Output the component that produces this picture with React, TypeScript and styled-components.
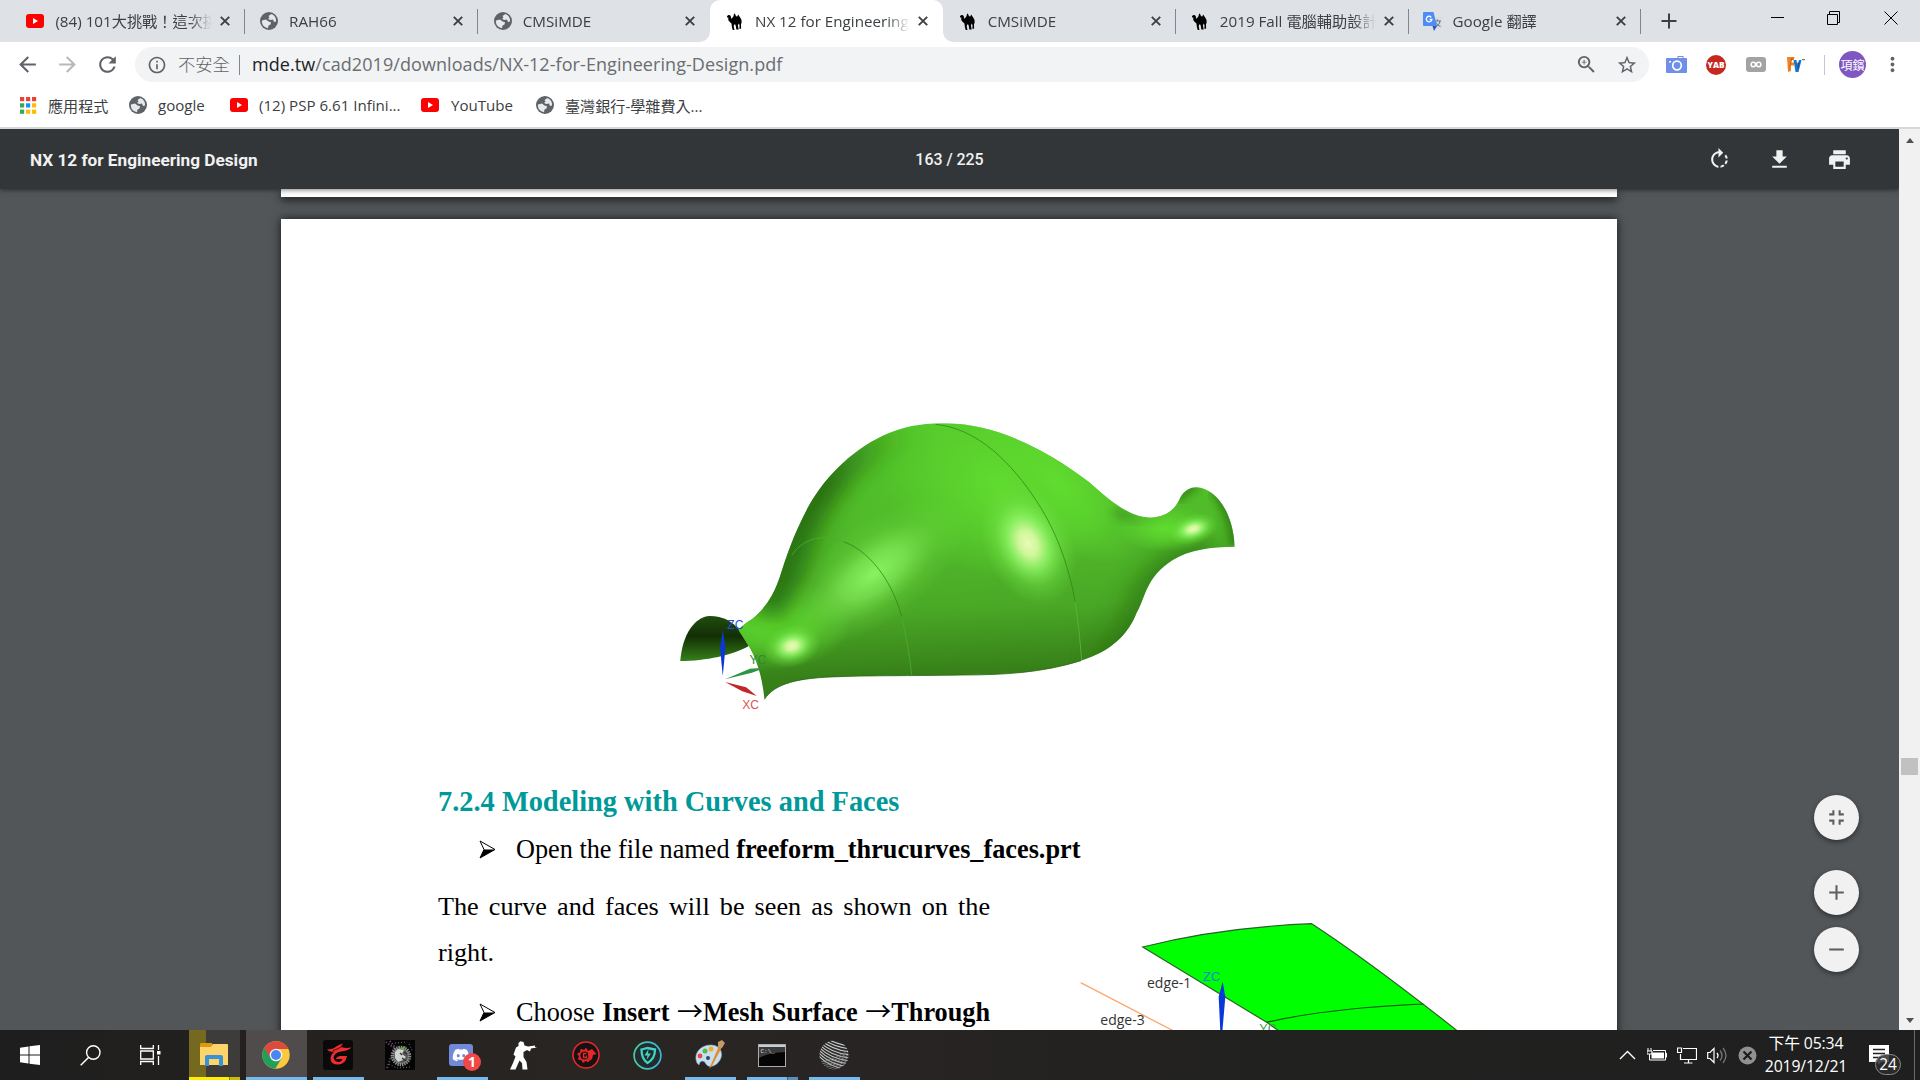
import React from "react";
import styled, { createGlobalStyle } from "styled-components";
import {
  MdRotateRight, MdFileDownload, MdPrint, MdFullscreenExit, MdAdd, MdRemove,
  MdArrowBack, MdArrowForward, MdRefresh, MdInfoOutline, MdZoomIn, MdStarBorder,
  MdMoreVert,
} from "react-icons/md";
import { FaDiscord } from "react-icons/fa";

const ui = `"Open Sans", "Noto Sans CJK TC", sans-serif`;

const Global = createGlobalStyle`
  html, body { margin: 0; padding: 0; overflow: hidden; }
  * { box-sizing: border-box; }
  svg { display: block; flex: none; }
`;

const Screen = styled.div`
  width: 1920px; height: 1080px; display: flex; flex-direction: column;
  font-family: ${ui}; overflow: hidden; background: #fff;
`;

/* ---------- browser tabs ---------- */
const TabStrip = styled.div`
  height: 42px; flex: none; background: #dee1e6; display: flex; padding-left: 12.4px;
`;
const Tab = styled.div<{ $active?: boolean; $line?: boolean; $pad?: number }>`
  width: 232.7px; height: 42px; flex: none; display: flex; align-items: center;
  padding: 0 12px 0 ${(p) => p.$pad ?? 14}px; position: relative;
  background: ${(p) => (p.$active ? "#fff" : "transparent")};
  border-radius: ${(p) => (p.$active ? "10px 10px 0 0" : "0")};
  &::after {
    content: ""; position: absolute; right: 0; top: 9px; width: 1px; height: 25px;
    background: ${(p) => (p.$line ? "#80868b" : "transparent")};
  }
`;
const TabFoot = styled.i<{ $right?: boolean }>`
  position: absolute; bottom: 0; width: 10px; height: 10px;
  ${(p) => (p.$right ? "right: -10px" : "left: -10px")};
  background: radial-gradient(circle at ${(p) => (p.$right ? "100%" : "0")} 0, #dee1e6 9.5px, #fff 10px);
`;
const Favicon = styled.span`
  width: 18px; height: 18px; margin-right: 11px; display: flex; align-items: center; justify-content: center; flex: none;
`;
const TabTitle = styled.span`
  flex: 1; white-space: nowrap; overflow: hidden; font-size: 15.2px; line-height: 24px; color: #3c4043;
  mask-image: linear-gradient(90deg, #000 calc(100% - 24px), transparent);
`;
const TabClose = styled.span`
  width: 16px; margin-left: 5px; display: flex; justify-content: center;
`;
const NewTab = styled.span`
  width: 55px; display: flex; align-items: center; justify-content: center;
`;
const WindowButtons = styled.div`
  margin-left: auto; display: flex; height: 36px; padding-right: 1px;
`;
const WinButton = styled.span`
  width: 57px; display: flex; align-items: center; justify-content: center;
`;

/* ---------- address bar ---------- */
const AddressBar = styled.div`
  height: 46px; flex: none; display: flex; align-items: center; padding: 0 14px 1px 15px; color: #5f6368;
`;
const NavButton = styled.span<{ $dim?: boolean }>`
  width: 40px; display: flex; justify-content: center; padding-right: 15px;
  opacity: ${(p) => (p.$dim ? 0.45 : 1)};
`;
const Omnibox = styled.div`
  width: 1514px; flex: none; height: 35px; border-radius: 18px; background: #f1f3f4; display: flex; align-items: center;
  padding: 0 12px 0 12px;
`;
const Insecure = styled.span`
  font-size: 17.3px; margin-left: 11px; width: 61px; white-space: nowrap; font-weight: 300; padding-bottom: 2px;
`;
const Divider = styled.i<{ $h: number; $c: string }>`
  width: 1px; height: ${(p) => p.$h}px; background: ${(p) => p.$c}; flex: none;
`;
const Url = styled.span`
  margin-left: 12px; font-size: 18px; letter-spacing: 0.07px; white-space: nowrap; flex: 1; color: #6a6d71; padding-bottom: 2px;
  b { font-weight: 400; color: #202124; }
`;
const OmniAction = styled.span`
  width: 59px; display: flex; justify-content: center;
  &:last-child { width: 21px; }
`;
const Extensions = styled.div`
  display: flex; align-items: center; margin-left: 7px; flex: none;
`;
const Ext = styled.span`
  width: 40px; display: flex; justify-content: center;
  &:nth-child(4) { margin-right: 8px; }
`;
const Avatar = styled.span`
  width: 27px; height: 27px; border-radius: 50%; background: #7e57c2; color: #fff; font-size: 12px; flex: none;
  display: flex; align-items: center; justify-content: center; margin: 0 15px 0 14px; white-space: nowrap;
`;

/* ---------- bookmarks ---------- */
const Bookmarks = styled.div`
  height: 41px; flex: none; display: flex; align-items: center; padding: 0 0 5px 20px; border-bottom: 2px solid #d6d8dc;
`;
const Bookmark = styled.span<{ $w: number; $gap?: number }>`
  width: ${(p) => p.$w}px; display: flex; align-items: center; gap: ${(p) => p.$gap ?? 11}px; font-size: 15.100px; color: #3c4043;
  white-space: nowrap;
`;

/* ---------- pdf viewer ---------- */
const Browser = styled.div`height: 901px; flex: none; display: flex;`;
const Viewer = styled.div`
  width: 1899px; height: 901px; background: #525659; display: flex; flex-direction: column; overflow: hidden; position: relative;
`;
const PdfBar = styled.div`
  height: 60px; flex: none; background: #323639; color: #f1f1f1; display: grid; align-items: center;
  grid-template-columns: 1fr auto 1fr; padding: 0 30px; z-index: 2;
  box-shadow: 0 1px 5px rgba(0,0,0,.5);
  font: 500 15.9px Roboto, sans-serif;
`;
const PdfTitle = styled.span`font-size: 17.2px; font-weight: 700; padding-top: 1px;`;
const PdfActions = styled.div`
  justify-self: end; display: flex; gap: 35px; margin-right: 17px;
`;
const PageTail = styled.div`
  width: 1336px; height: 8px; margin: 0 0 22px 281px; flex: none; background: #fff;
  box-shadow: 0 3px 9px rgba(0,0,0,.7);
`;
const Page = styled.div`
  width: 1336px; height: 1729px; margin-left: 281px; flex: none; background: #fff; padding: 181px 157px 0;
  box-shadow: 0 0 9px rgba(0,0,0,.75); font-family: "Liberation Serif", serif; color: #000;
`;
const Figure = styled.div`height: 382px; padding-left: 222px;`;
const Heading = styled.h3`
  margin: 0; font-size: 28.4px; line-height: 40px; height: 45px; color: #009999; white-space: nowrap;
`;
const Item = styled.div<{ $w?: number; $after?: number }>`
  height: 45px; display: flex; align-items: center; gap: 20px; padding-left: 41px; font-size: 26.25px; white-space: nowrap;
  width: ${(p) => (p.$w ? p.$w + "px" : "auto")}; margin-bottom: ${(p) => p.$after ?? 0}px;
`;
const Spread = styled.span`
  flex: 1; text-align: justify; text-align-last: justify; line-height: 30px;
`;
const Ray = styled.span`font: 400 26px/1 "Noto Sans CJK TC", sans-serif; display: inline-block; height: 26px; line-height: 26px;`;
const Columns = styled.div`display: flex;`;
const TextColumn = styled.div`width: 552px; flex: none;`;
const Para = styled.p`
  margin: 0 0 15px; font-size: 26.2px; line-height: 45.5px; text-align: justify;
`;
const SideFigure = styled.div`padding: 16px 0 0 70px;`;

const Fabs = styled.div`
  position: absolute; right: 40.5px; top: 666px; display: flex; flex-direction: column; gap: 12px; z-index: 3;
`;
const Fab = styled.span<{ $gap?: number }>`
  width: 45px; height: 45px; border-radius: 50%; background: #f1f1f1; color: #5f5f5f; display: flex;
  align-items: center; justify-content: center; margin-bottom: ${(p) => p.$gap ?? 0}px;
  box-shadow: 0 2px 5px rgba(0,0,0,.45);
`;
const Scrollbar = styled.div`
  width: 21px; background: #f1f1f1; display: flex; flex-direction: column; align-items: center; padding: 9px 0 7px;
`;
const Arrow = styled.i<{ $down?: boolean }>`
  border: 4.5px solid transparent; border-top-width: ${(p) => (p.$down ? 5 : 0)}px; border-bottom-width: ${(p) => (p.$down ? 0 : 5)}px;
  border-${(p) => (p.$down ? "top" : "bottom")}-color: #505050;
`;
const Thumb = styled.i`width: 17px; height: 17px; background: #c1c1c1; margin: 615px 0 auto;`;

/* ---------- taskbar ---------- */
const Taskbar = styled.div`
  height: 50px; flex: none; display: flex; color: #fff;
  background: linear-gradient(90deg, #1e1e1e, #24211f 14%, #292523 30%, #272423 48%, #212120 65%, #1f1f1f);
`;
const SysButton = styled.span<{ $w?: number }>`
  width: ${(p) => p.$w ?? 60}px; display: flex; align-items: center; justify-content: center;
`;
const Task = styled.span<{ $open?: string }>`
  width: 62px; height: 50px; display: flex; align-items: center; justify-content: center; position: relative;
  padding: 0 1px 0 0;
  &::after { content: ""; position: absolute; left: 6px; right: 5px; bottom: 0; height: 3px; background: ${(p) => p.$open ?? "none"}; }
`;
const ExplorerTask = styled(Task)`
  background: linear-gradient(90deg, transparent 6px, #75691f 6px 23px, #3e3c3b 23px 57px, transparent 57px);
`;
const ChromeTask = styled(Task)`
  background: linear-gradient(90deg, transparent 1px, #504c4b 1px);
  &::after { left: 1px; right: 0; }
`;
const Badge = styled.i`
  position: absolute; left: 32px; top: 23px; width: 18px; height: 18px; border-radius: 50%; background: #f04747;
  font: 700 14px/18px "Open Sans", sans-serif; text-align: center;
`;
const Tray = styled.div`margin-left: auto; display: flex; align-items: center;`;
const TraySlot = styled.span`width: 30px; display: flex; justify-content: center;`;
const Clock = styled.div`
  width: 88px; margin-right: 10px; text-align: center; font-size: 15.8px; line-height: 23.5px; letter-spacing: -0.15px;
  white-space: nowrap;
`;
const Notice = styled.span`width: 54px; height: 50px; position: relative;`;
const NoticeIcon = styled.span`position: absolute; left: 9px; top: 15px;`;
const NoticeCount = styled.span`
  position: absolute; left: 15px; top: 24px; width: 26px; height: 21px; border: 1px solid #8c8c8c; border-radius: 11px;
  background: rgba(45,45,45,.85); font-size: 15.5px; line-height: 18px; text-align: center;
`;
const ShowDesktop = styled.i`width: 6px; height: 50px; border-left: 1px solid #6a6a6a;`;

/* ---------- drawings ---------- */
const YouTube = () => (
  <svg width="18" height="14" viewBox="0 0 18 14"><rect width="18" height="14" rx="3" fill="#f00" /><path d="M7 4v6l5-3z" fill="#fff" /></svg>
);
const Globe = () => (
  <svg width="18" height="18" viewBox="0 0 18 18">
    <circle cx="9" cy="9" r="9" fill="#5f6368" />
    <path d="M2 8.500 6 7.500 8.500 9.500 11 10.200 10.500 12.500 8.500 13.500 8 16.200Q2 15 1.800 9Z" fill="#e6e8eb" />
    <path d="M11 2.200 8.500 4 9.500 5.500 8 7 10.500 8 13 7.500 14 10 16 9.500Q16.500 4.500 12 2.300Z" fill="#e6e8eb" />
  </svg>
);
const Camel = () => (
  <svg width="15" height="17" viewBox="0 0 15 17">
    <path d="M0 3.200 1.200 2l1.900.3L4 3.800 3.900 5.200l.9.300 1.700-2.300.7-3L8.300 1.500 9 3.200l1.200.2 1-1.800 1.100 1.700 1.200 1.600 1 2 .1 3-.6 1 .1 4.900h-1.700l.1-3.800-.8-1.400-.8 2 .8 3.800H9.300l-.4-3-.6-2-1.200 0-.4 2.200.8 3.300H5.700l-.9-3.200-.3-3.300L2.800 9 1.200 7 1.400 4.800.2 4.500z" fill="#000" />
  </svg>
);
const Translate = () => (
  <svg width="19" height="19" viewBox="0 0 19 19">
    <rect x="8" y="5" width="11" height="12" rx="1" fill="#dadce0" />
    <path d="M12 9h6M14.500 7.500V9M17 9c-.5 3-2 4.500-4 5.500M13 10.500c1 2 2 3 4.500 4" stroke="#607988" fill="none" />
    <path d="M1 0h9.500l3.500 14H1a1 1 0 0 1-1-1V1a1 1 0 0 1 1-1z" fill="#4d8cf5" />
    <path d="M9.500 14H14l-3 5z" fill="#2a56c6" />
    <path d="M8.300 5.300A2.800 2.800 0 1 0 8.900 7.500H6.600" stroke="#fff" strokeWidth="1.300" fill="none" />
  </svg>
);
const Apps = () => {
  const colors = ["#ea4335", "#ea4335", "#ea4335", "#34a853", "#1a90ff", "#fbbc05", "#34a853", "#fbbc05", "#fbbc05"];
  return (
    <svg width="17" height="17" viewBox="0 0 17 17">
      {colors.map((c, i) => <rect key={i} x={(i % 3) * 6} y={Math.floor(i / 3) * 6.3} width="4.200" height="4.200" fill={c} />)}
    </svg>
  );
};
const Camera = () => (
  <svg width="21" height="17" viewBox="0 0 21 17">
    <rect y="2" width="21" height="15" rx="1" fill="#6f8fe8" /><rect x="12" y=".5" width="5" height="3" fill="none" stroke="#6f8fe8" />
    <circle cx="11" cy="9.500" r="4.300" fill="none" stroke="#fff" strokeWidth="1.700" /><rect x="3" y="5" width="2" height="1.500" fill="#fff" />
  </svg>
);
const Yab = () => (
  <svg width="20" height="20" viewBox="0 0 20 20"><circle cx="10" cy="10" r="10" fill="#c4281f" />
    <text x="10" y="13" fontSize="8.200" fontWeight="800" fill="#fff" textAnchor="middle" fontFamily="Open Sans">YAB</text></svg>
);
const Infinity8 = () => (
  <svg width="20" height="15" viewBox="0 0 20 15"><rect width="20" height="15" rx="3" fill="#a3a3a3" />
    <circle cx="7.300" cy="7.500" r="2.200" fill="none" stroke="#fff" strokeWidth="1.500" /><circle cx="12.700" cy="7.500" r="2.200" fill="none" stroke="#fff" strokeWidth="1.500" /></svg>
);
const Fv = () => (
  <svg width="18" height="15" viewBox="0 0 18 15">
    <path d="M0 0h7.500L7 3H4v2.500h3v3H4V14l-3 1z" fill="#ef8420" /><path d="M1.500 13 4.500 1H6z" fill="#a83c18" opacity=".7" />
    <path d="M6.500 3h3l.8 6 1.700-6h2.500l-3 12H8.500z" fill="#1976c9" /><path d="M9.500 6 11 13l2-8z" fill="#0b3e7a" opacity=".6" /><rect x="15" y="2" width="3" height="1.200" fill="#5a7896" />
  </svg>
);

const Sack = () => (
  <svg width="600" height="330" viewBox="0 0 1568 990" preserveAspectRatio="none">
    <defs>
      <linearGradient id="skin" x1="0" y1="0" x2="0.080" y2="1">
        <stop offset="0" stopColor="#55c92a" /><stop offset=".45" stopColor="#50b92a" /><stop offset=".7" stopColor="#4aa826" /><stop offset=".92" stopColor="#378019" /><stop offset="1" stopColor="#357c1b" />
      </linearGradient>
      <radialGradient id="bright"><stop offset="0" stopColor="#60dc2f" /><stop offset=".4" stopColor="#5dd72e" stopOpacity=".75" /><stop offset="1" stopColor="#5dd72e" stopOpacity="0" /></radialGradient>
      <radialGradient id="shine"><stop offset="0" stopColor="#8ffa66" stopOpacity=".9" /><stop offset=".35" stopColor="#86f15c" stopOpacity=".65" /><stop offset=".7" stopColor="#72de44" stopOpacity=".22" /><stop offset="1" stopColor="#70dd40" stopOpacity="0" /></radialGradient>
      <radialGradient id="spot"><stop offset="0" stopColor="#e9fbb5" /><stop offset=".2" stopColor="#d6f9a0" stopOpacity=".95" /><stop offset=".42" stopColor="#93f66a" stopOpacity=".8" /><stop offset=".7" stopColor="#78e84c" stopOpacity=".35" /><stop offset="1" stopColor="#6fe040" stopOpacity="0" /></radialGradient>
      <linearGradient id="inside" x1="0" y1="0" x2="0" y2="1"><stop offset="0" stopColor="#1f4d0c" /><stop offset=".45" stopColor="#132f06" /><stop offset="1" stopColor="#358018" /></linearGradient>
      <linearGradient id="rim" gradientUnits="userSpaceOnUse" x1="300" y1="600" x2="640" y2="80"><stop offset="0" stopColor="#256a10" stopOpacity=".9" /><stop offset=".6" stopColor="#256a10" /><stop offset="1" stopColor="#256a10" stopOpacity="0" /></linearGradient>
      <filter id="soft" x="-30%" y="-30%" width="160%" height="160%"><feGaussianBlur stdDeviation="34" /></filter>
      <filter id="soft2" x="-30%" y="-30%" width="160%" height="160%"><feGaussianBlur stdDeviation="12" /></filter>
      <clipPath id="body">
        <path d="M205 690C215 678 225 668 240 658C275 625 295 590 312 535C330 470 350 400 390 315C435 225 510 140 600 98C655 74 700 70 750 70C870 72 1000 140 1120 245C1180 305 1225 350 1280 353C1325 352 1348 325 1360 292C1370 272 1385 262 1402 262C1450 265 1497 330 1502 440C1440 440 1380 450 1340 480C1270 530 1270 590 1245 640C1225 700 1180 755 1100 782C1000 818 900 825 790 825C640 828 560 826 470 830C360 833 300 850 273 898C268 840 255 775 225 725Z" />
      </clipPath>
    </defs>
    <path d="M53 783C58 705 90 650 130 648C165 648 190 665 207 690L232 738C190 765 120 783 53 783Z" fill="url(#inside)" />
    <g clipPath="url(#body)">
      <rect x="180" y="50" width="1350" height="860" fill="url(#skin)" />
      <ellipse cx="890" cy="250" rx="320" ry="280" fill="url(#bright)" transform="rotate(30 890 250)" />
      <ellipse cx="1040" cy="250" rx="130" ry="290" fill="url(#bright)" transform="rotate(-38 1040 250)" />
      <ellipse cx="290" cy="670" rx="210" ry="140" fill="url(#bright)" />
      <path d="M262 635C310 580 320 500 345 430C390 290 450 180 600 90L660 60" fill="none" stroke="url(#rim)" strokeWidth="105" filter="url(#soft)" />
      <path d="M1150 800C1240 740 1250 620 1280 570C1310 510 1340 480 1450 450" fill="none" stroke="#256a10" strokeWidth="75" opacity=".7" filter="url(#soft)" />
      <path d="M1190 330C1230 370 1270 370 1310 360" fill="none" stroke="#3c9120" strokeWidth="24" opacity=".7" filter="url(#soft2)" />
      <path d="M1450 265C1490 330 1505 400 1502 440" fill="none" stroke="#256a10" strokeWidth="26" opacity=".8" filter="url(#soft2)" />
      <path d="M1352 300C1365 270 1385 262 1402 262" fill="none" stroke="#256a10" strokeWidth="22" opacity=".8" filter="url(#soft2)" />
      <ellipse cx="1320" cy="385" rx="130" ry="70" fill="url(#bright)" />
      <ellipse cx="560" cy="520" rx="300" ry="140" fill="url(#shine)" transform="rotate(-42 560 520)" />
      <ellipse cx="962" cy="430" rx="118" ry="190" fill="url(#spot)" transform="rotate(-18 962 430)" />
      <ellipse cx="345" cy="738" rx="78" ry="62" fill="url(#spot)" transform="rotate(-25 345 738)" />
      <ellipse cx="1393" cy="387" rx="68" ry="44" fill="url(#spot)" transform="rotate(-22 1393 387)" />
    </g>
    <g fill="none" stroke="#2f861a" strokeWidth="2.200">
      <path d="M720 73C830 85 920 190 985 305C1040 400 1070 510 1085 605" />
      <path d="M1085 605Q1095 680 1102 780" stroke="#5cb93c" />
      <path d="M480 425C560 460 610 560 632 650" />
      <path d="M345 465C380 405 440 405 480 425M632 650Q648 730 658 826" stroke="#4fae30" />
      <path d="M273 898C300 850 360 833 470 830C560 826 640 828 790 825C900 825 1000 818 1100 782" stroke="#2a6514" />
    </g>
    <path d="M164 690 157 745 164 828 171 745Z" fill="#0a37d8" />
    <path d="M170 838 235 806 275 803 240 818Z" fill="#2d9444" />
    <path d="M170 846 225 862 253 888 215 874Z" fill="#c2262a" />
    <g fontFamily="Liberation Sans" fontSize="38">
      <text x="176" y="687" fill="#1d50e0" textLength="42" lengthAdjust="spacingAndGlyphs">ZC</text>
      <text x="234" y="791" fill="#2f8a33" textLength="44" lengthAdjust="spacingAndGlyphs">YC</text>
      <text x="215" y="928" fill="#dd5555" textLength="44" lengthAdjust="spacingAndGlyphs">XC</text>
    </g>
  </svg>
);

const Faces = () => (
  <svg width="440" height="130" viewBox="0 0 1320 390">
    <path d="M248 141Q480 82 755 71Q930 185 1195 395H660L620 367Z" fill="#0f0" stroke="#2b5f2b" strokeWidth="3.500" />
    <path d="M620 367Q800 325 1090 312" fill="none" stroke="#174f17" strokeWidth="3.500" />
    <path d="M62 248 345 395" stroke="#ffa66b" strokeWidth="4" />
    <path d="M488 245 476 290 481 395H487L496 290Z" fill="#0a37d8" />
    <text x="428" y="243" fontSize="40" fill="#1183e0" fontFamily="Liberation Sans">ZC</text>
    <text x="598" y="399" fontSize="38" fill="#4aa04a" fontFamily="Liberation Sans">YC</text>
    <g fontFamily="Open Sans" fontSize="41" fill="#333">
      <text x="261" y="263" textLength="133" lengthAdjust="spacingAndGlyphs">edge-1</text>
      <text x="121" y="376" textLength="133" lengthAdjust="spacingAndGlyphs">edge-3</text>
    </g>
  </svg>
);
const Bullet = () => (
  <svg width="17" height="19" viewBox="0 0 17 19">
    <path d="M1 1 16 9.500 1 18 5 9.500Z" fill="#fff" stroke="#000" strokeWidth="1" /><path d="M5 9.500H16L1 18Z" fill="#000" />
  </svg>
);

const ChromeLogo = () => (
  <svg width="28" height="28" viewBox="0 0 28 28">
    <circle cx="14" cy="14" r="13.700" fill="#fbc93b" />
    <path d="M14 14 2.100 7.100A13.700 13.700 0 0 0 13.200 27.700L19.500 17.500Z" fill="#21a05b" />
    <path d="M2.100 7.100A13.700 13.700 0 0 1 26.400 8H14L8.500 17Z" fill="#dc4a3d" />
    <circle cx="14" cy="14" r="6.300" fill="#f4f4f4" /><circle cx="14" cy="14" r="5" fill="#4a86ee" />
  </svg>
);
const Folder = () => (
  <svg width="28" height="24" viewBox="0 0 28 24">
    <path d="M0 1.500Q0 0 1 0H12L13 2.500V5H0z" fill="#dc9a0c" /><path d="M0 4H11L13 1H27Q28 1 28 2V22H0z" fill="#fdd46a" />
    <path d="M5 23V14Q5 12 7 12H21Q23 12 23 14V23H19V16H9V23z" fill="#3792d6" />
  </svg>
);
const Garena = () => (
  <svg width="30" height="30" viewBox="0 0 30 30"><rect width="30" height="30" rx="3" fill="#0b0a0a" />
    <path d="M4 9.500Q10 9.500 14 6 17 4 20 3.500 18.500 5 18 7 23 8.500 28.500 7.500 25 11 18 11.500 11.500 12.500 10.500 17.500 11.500 22 16 22 19 21.500 19.500 19L13 19Q13.500 16.500 17 16H24Q22.500 24.500 15 24.500 7.500 24.500 7.500 18.500 8 14 11.500 11.500 6.500 12.500 4 9.500Z" fill="#ef2d2d" />
    <path d="M10 10.500Q14 9.500 18 7" stroke="#0b0a0a" strokeWidth=".8" fill="none" /></svg>
);
const Crest = () => (
  <svg width="30" height="30" viewBox="0 0 30 30"><rect width="30" height="30" fill="#050505" />
    <path d="M1 2 9 8 6 17 2 28M5 1 12 10" stroke="#795288" strokeWidth="2" strokeDasharray="1 2" fill="none" />
    <circle cx="16" cy="16" r="8.500" fill="#555" stroke="#8c918d" strokeWidth="3.500" strokeDasharray="1.300 .9" />
    <path d="M10 12 13 9 19 10 17 14 21 17 18 20 13 22 10 18Z" fill="#cfd5d2" /><path d="M19 12 22 14M17 18 21 21M15 13 17 15" stroke="#333" fill="none" strokeWidth="1.300" />
    <path d="M11 6 16 8 21 6 18 10Z" fill="#6fae3c" /><path d="M4 24 12 28 26 27M24 4 28 12M10 3 22 2" stroke="#777" strokeDasharray="1 2" fill="none" />
  </svg>
);
const DiscordTile = () => (
  <svg width="26" height="24" viewBox="0 0 26 24"><rect x="0" y="1" width="24" height="22" rx="3" fill="#7289da" /><FaDiscord x="3" y="3" size={18} color="#fff" /></svg>
);
const Soldier = () => (
  <svg width="27" height="29" viewBox="0 0 27 29"><path d="M8.500 2 10.500.3 13.500 1 14.500 4.500 18 5.500 25 4.500V6L27 6.500 21 7.500 20 10.500 17 9 13.500 11 13.500 16 16.500 21 17.500 28.500H12.500L12 22 9.500 19.500 5.500 28.500H0L3 22 5.500 15.500 3.500 13.500 6 6.500 8.500 5Z" fill="#fff" /></svg>
);
const RedGear = () => (
  <svg width="28" height="28" viewBox="0 0 28 28"><circle cx="14" cy="14" r="13" fill="#151212" stroke="#e8272c" strokeWidth="1.600" />
    <circle cx="12.500" cy="14.500" r="5" fill="none" stroke="#e8272c" strokeWidth="1.800" /><circle cx="12.500" cy="14.500" r="6.400" fill="none" stroke="#e8272c" strokeWidth="1.600" strokeDasharray="2.200 2.800" />
    <path d="M16 10 20 8 24.500 13 21 14 20 18 15 21.500 18 17 16 14Z" fill="#e8272c" /><path d="M14.500 12.500H11.500V16.500H14.500V14.500" stroke="#e8272c" fill="none" strokeWidth="1.300" /></svg>
);
const Shield = () => (
  <svg width="29" height="29" viewBox="0 0 29 29"><defs><linearGradient id="teal"><stop stopColor="#43cf9d" /><stop offset="1" stopColor="#35b6df" /></linearGradient></defs>
    <circle cx="14.500" cy="14.500" r="13.400" fill="#252a2e" stroke="url(#teal)" strokeWidth="1.700" />
    <path d="M8.500 8.500 14.500 7 22 8.500Q22 18 14.500 22Q8.500 18 8.500 8.500Z" fill="none" stroke="#3fd3c0" strokeWidth="2.300" /><path d="M15.500 8 11.500 14.500H14.500L13.500 19 18 12.500H15Z" fill="#3fd3c0" /></svg>
);
const Palette = () => (
  <svg width="32" height="30" viewBox="0 0 32 30"><path d="M3 23C-1 14 6 5 17 5C26 5 30 13 26 20C22 27 14 28 12 24C10 20 6 20 5 25Z" fill="#c6e0f1" stroke="#86aec9" strokeWidth=".6" />
    <circle cx="6" cy="16" r="2.400" fill="#e24b42" /><circle cx="11" cy="11" r="2.500" fill="#59b947" /><circle cx="17" cy="9" r="2.500" fill="#f4ae22" /><circle cx="14" cy="18" r="2" fill="#2c4966" />
    <path d="M15 29 25 6 28 7 18 26Z" fill="#e68a2c" /><path d="M24 7 24 2 28 0 31 3 28 8Z" fill="#c39a6b" /></svg>
);
const Console = () => (
  <svg width="28" height="23" viewBox="0 0 28 23"><rect x=".5" y=".5" width="27" height="22" fill="#050505" stroke="#a9adb2" /><rect x="1" y="1" width="26" height="2" fill="#c9ccd0" />
    <path d="M1 3H27V8Q10 9 1 14Z" fill="#3b3b3b" /><text x="2.500" y="9" fontSize="6" fill="#ddd" fontFamily="Liberation Mono">C:\_</text></svg>
);
const Sphere = () => (
  <svg width="30" height="30" viewBox="0 0 30 30"><defs><clipPath id="ball"><circle cx="15" cy="15" r="14.500" /></clipPath></defs>
    <g clipPath="url(#ball)"><rect width="30" height="30" fill="#2c2c2c" />
      {Array.from({ length: 9 }, (_, i) => <path key={i} d={`M-2 ${i * 3 - 10}Q10 ${i * 3 + 4} 32 ${i * 3 + 6}`} stroke="#cfcfcf" strokeWidth="1.100" fill="none" />)}
      {Array.from({ length: 6 }, (_, i) => <path key={i} d={`M2 ${i * 2.2 + 22}Q20 ${i * 2.2 + 18} 32 ${i * 2.5 + 8}`} stroke="#8f8f8f" strokeWidth=".7" fill="none" />)}
    </g></svg>
);

const TABS = [
  { t: "(84) 101大挑戰！這次挑戰", icon: <YouTube />, line: true },
  { t: "RAH66", icon: <Globe />, line: true, pad: 15 },
  { t: "CMSiMDE", icon: <Globe />, pad: 16 },
  { t: "NX 12 for Engineering Design", icon: <Camel />, active: true, pad: 15.5 },
  { t: "CMSiMDE", icon: <Camel />, line: true, pad: 15.5 },
  { t: "2019 Fall 電腦輔助設計", icon: <Camel />, line: true, pad: 15 },
  { t: "Google 翻譯", icon: <Translate />, line: true, pad: 15 },
];
const BLUE = "#76b9ed";

export default function App() {
  return (
    <Screen>
      <Global />
      <TabStrip>
        {TABS.map((tab, i) => (
          <Tab key={i} $active={tab.active} $line={tab.line} $pad={tab.pad}>
            {tab.active && <><TabFoot /><TabFoot $right /></>}
            <Favicon>{tab.icon}</Favicon>
            <TabTitle>{tab.t}</TabTitle>
            <TabClose><svg width="10" height="10" viewBox="0 0 10 10"><path d="M.8.8 9.200 9.200M9.200.8.8 9.200" stroke="#3c4043" strokeWidth="1.900" /></svg></TabClose>
          </Tab>
        ))}
        <NewTab><svg width="16" height="16" viewBox="0 0 16 16"><path d="M8 .5V15.500M.5 8H15.500" stroke="#3c4043" strokeWidth="2" /></svg></NewTab>
        <WindowButtons>
          <WinButton><svg width="14" height="14"><path d="M1 6.500H14" stroke="#000" /></svg></WinButton>
          <WinButton><svg width="14" height="14"><path d="M.5 3.500H10.500V13.500H.5ZM2.500 3V.5H12.500V11.500H11" stroke="#000" fill="none" /></svg></WinButton>
          <WinButton><svg width="14" height="14"><path d="M.5.5 13.500 13.500M13.500.5.5 13.500" stroke="#000" fill="none" /></svg></WinButton>
        </WindowButtons>
      </TabStrip>

      <AddressBar>
        <NavButton><MdArrowBack size={25} /></NavButton>
        <NavButton $dim><MdArrowForward size={25} /></NavButton>
        <NavButton><MdRefresh size={25} /></NavButton>
        <Omnibox>
          <MdInfoOutline size={20} />
          <Insecure>不安全</Insecure>
          <Divider $h={20} $c="#80868b" />
          <Url><b>mde.tw</b>/cad2019/downloads/NX-12-for-Engineering-Design.pdf</Url>
          <OmniAction><MdZoomIn size={23} /></OmniAction>
          <OmniAction><MdStarBorder size={22} /></OmniAction>
        </Omnibox>
        <Extensions>
          <Ext><Camera /></Ext><Ext><Yab /></Ext><Ext><Infinity8 /></Ext><Ext><Fv /></Ext>
          <Divider $h={20} $c="#c4c7cb" />
          <Avatar>項鑌</Avatar>
          <MdMoreVert size={23} />
        </Extensions>
      </AddressBar>

      <Bookmarks>
        <Bookmark $w={109}><Apps />應用程式</Bookmark>
        <Bookmark $w={101}><Globe />google</Bookmark>
        <Bookmark $w={191}><YouTube />(12) PSP 6.61 Infini...</Bookmark>
        <Bookmark $w={115} $gap={12}><YouTube />YouTube</Bookmark>
        <Bookmark $w={180}><Globe />臺灣銀行-學雜費入...</Bookmark>
      </Bookmarks>

      <Browser>
        <Viewer>
          <PdfBar>
            <PdfTitle>NX 12 for Engineering Design</PdfTitle>
            <span>163 / 225</span>
            <PdfActions><MdRotateRight size={25} /><MdFileDownload size={25} /><MdPrint size={25} /></PdfActions>
          </PdfBar>
          <PageTail />
          <Page>
            <Figure><Sack /></Figure>
            <Heading>7.2.4 Modeling with Curves and Faces</Heading>
            <Item $after={12}><Bullet /><span>Open the file named <b>freeform_thrucurves_faces.prt</b></span></Item>
            <Columns>
              <TextColumn>
                <Para>The curve and faces will be seen as shown on the right.</Para>
                <Item $w={552}><Bullet /><Spread>Choose <b>Insert <Ray>→</Ray>Mesh Surface <Ray>→</Ray>Through</b></Spread></Item>
              </TextColumn>
              <SideFigure><Faces /></SideFigure>
            </Columns>
          </Page>
          <Fabs>
            <Fab $gap={18}><MdFullscreenExit size={25} /></Fab>
            <Fab><MdAdd size={25} /></Fab>
            <Fab><MdRemove size={25} /></Fab>
          </Fabs>
        </Viewer>
        <Scrollbar><Arrow /><Thumb /><Arrow $down /></Scrollbar>
      </Browser>

      <Taskbar>
        <SysButton><svg width="20" height="20" viewBox="0 0 20 20"><path d="M0 2.800 8.500 1.500V9.500H0zM9.500 1.300 20 0V9.500H9.500zM0 10.500H8.500V18.500L0 17.300zM9.500 10.500H20V20L9.500 18.700z" fill="#fff" /></svg></SysButton>
        <SysButton><svg width="21" height="21" viewBox="0 0 21 21"><circle cx="13.300" cy="7.500" r="6.700" fill="none" stroke="#fff" strokeWidth="1.400" /><path d="M8.500 12.500.7 20.300" stroke="#fff" strokeWidth="1.500" /></svg></SysButton>
        <SysButton><svg width="21" height="20" viewBox="0 0 21 20"><path d="M.7 0V3.500H13.300V0M.7 20V16.500H13.300V20M.7 6H13.300V14H.7ZM18.500 0V5M18.500 11V20" fill="none" stroke="#fff" strokeWidth="1.300" /><rect x="17" y="6" width="3.500" height="3.500" fill="#fff" /></svg></SysButton>
        <SysButton $w={3} />
        <ExplorerTask $open="linear-gradient(90deg, #ffee00 40px, #8c8200 40px 41px, #c9bd0a 41px)"><Folder /></ExplorerTask>
        <ChromeTask $open={BLUE}><ChromeLogo /></ChromeTask>
        <Task $open={BLUE}><Garena /></Task>
        <Task><Crest /></Task>
        <Task $open={BLUE}><DiscordTile /><Badge>1</Badge></Task>
        <Task><Soldier /></Task>
        <Task><RedGear /></Task>
        <Task><Shield /></Task>
        <Task $open={BLUE}><Palette /></Task>
        <Task $open={`linear-gradient(90deg, ${BLUE} 40px, #40607c 40px 41px, #5b8fb8 41px)`}><Console /></Task>
        <Task $open={BLUE}><Sphere /></Task>
        <Tray>
          <TraySlot><svg width="17" height="10"><path d="M1 9 8.500 1.500 16 9" stroke="#fff" fill="none" strokeWidth="1.400" /></svg></TraySlot>
          <TraySlot><svg width="20" height="14" viewBox="0 0 20 14"><path d="M1 0V3M4 0V3M0 3H5V6H0ZM2.500 6V12H18.500V2.500H6M19.500 5V9.500" fill="none" stroke="#fff" /><rect x="4.500" y="4.500" width="12.500" height="6" fill="#fff" /></svg></TraySlot>
          <TraySlot><svg width="20" height="17" viewBox="0 0 20 17"><path d="M6 1.500H19.500V12.500H3.500V7M11.500 12.500V15.500M7 16H15.500M.5 1H4.500V5.500H.5Z" fill="none" stroke="#fff" strokeWidth="1.200" /></svg></TraySlot>
          <TraySlot><svg width="20" height="17" viewBox="0 0 20 17"><path d="M.7 5.500H3L7 1.500V15.500L3 11.500H.7Z" fill="none" stroke="#fff" strokeWidth="1.200" /><path d="M10 6Q12 8.500 10 11" stroke="#fff" fill="none" strokeWidth="1.300" /><path d="M13 3.500Q17 8.500 13 13.500M16 1Q22 8.500 16 16" stroke="#777" fill="none" strokeWidth="1.300" /></svg></TraySlot>
          <TraySlot><svg width="19" height="19" viewBox="0 0 19 19"><circle cx="9.500" cy="9.500" r="9" fill="#919191" /><path d="M5.500 5.500 13.500 13.500M13.500 5.500 5.500 13.500" stroke="#1d1d1d" strokeWidth="2.200" /></svg></TraySlot>
          <Clock>下午 05:34<br />2019/12/21</Clock>
          <Notice>
            <NoticeIcon><svg width="20" height="20" viewBox="0 0 20 20"><path d="M0 0H20V17H12L9 20V17H0Z" fill="#fff" /><path d="M4 4.500H16M4 8.500H16M4 12.500H12" stroke="#222" strokeWidth="1.300" /></svg></NoticeIcon>
            <NoticeCount>24</NoticeCount>
          </Notice>
          <ShowDesktop />
        </Tray>
      </Taskbar>
    </Screen>
  );
}
